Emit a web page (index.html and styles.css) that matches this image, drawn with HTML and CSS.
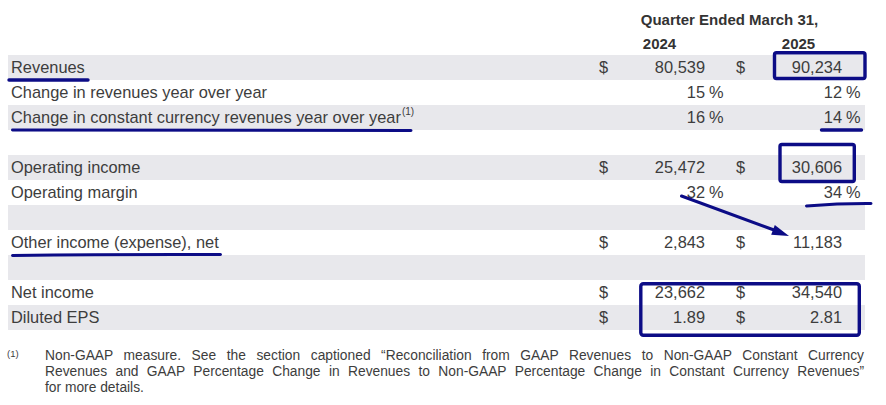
FILE: index.html
```html
<!DOCTYPE html>
<html lang="en">
<head>
<meta charset="utf-8">
<title>Quarter Ended March 31</title>
<link rel="stylesheet" href="styles.css">
</head>
<body>
<div class="page">
  <div class="table">
    <div class="row head1"><div class="quarter">Quarter Ended March 31,</div></div>
    <div class="row head2"><div class="year y1">2024</div><div class="year y2">2025</div></div>

    <div class="row band">
      <div class="label">Revenues</div>
      <div class="cur">$</div><div class="num">80,539</div><div class="pct"></div>
      <div class="cur">$</div><div class="num">90,234</div><div class="pct"></div>
    </div>
    <div class="row">
      <div class="label">Change in revenues year over year</div>
      <div class="cur"></div><div class="num">15</div><div class="pct">%</div>
      <div class="cur"></div><div class="num">12</div><div class="pct">%</div>
    </div>
    <div class="row band">
      <div class="label">Change in constant currency revenues year over year<span class="sup">(1)</span></div>
      <div class="cur"></div><div class="num">16</div><div class="pct">%</div>
      <div class="cur"></div><div class="num">14</div><div class="pct">%</div>
    </div>
    <div class="row"></div>
    <div class="row band">
      <div class="label">Operating income</div>
      <div class="cur">$</div><div class="num">25,472</div><div class="pct"></div>
      <div class="cur">$</div><div class="num">30,606</div><div class="pct"></div>
    </div>
    <div class="row">
      <div class="label">Operating margin</div>
      <div class="cur"></div><div class="num">32</div><div class="pct">%</div>
      <div class="cur"></div><div class="num">34</div><div class="pct">%</div>
    </div>
    <div class="row band"></div>
    <div class="row">
      <div class="label">Other income (expense), net</div>
      <div class="cur">$</div><div class="num">2,843</div><div class="pct"></div>
      <div class="cur">$</div><div class="num">11,183</div><div class="pct"></div>
    </div>
    <div class="row band"></div>
    <div class="row">
      <div class="label">Net income</div>
      <div class="cur">$</div><div class="num">23,662</div><div class="pct"></div>
      <div class="cur">$</div><div class="num">34,540</div><div class="pct"></div>
    </div>
    <div class="row band">
      <div class="label">Diluted EPS</div>
      <div class="cur">$</div><div class="num">1.89</div><div class="pct"></div>
      <div class="cur">$</div><div class="num">2.81</div><div class="pct"></div>
    </div>
  </div>

  <div class="footnote">
    <div class="fn-mark">(1)</div>
    <div class="fn-text">
      <span class="fn-line just">Non-GAAP measure. See the section captioned “Reconciliation from GAAP Revenues to Non-GAAP Constant Currency</span>
      <span class="fn-line just">Revenues and GAAP Percentage Change in Revenues to Non-GAAP Percentage Change in Constant Currency Revenues”</span>
      <span class="fn-line">for more details.</span>
    </div>
  </div>

  <svg class="marks" width="886" height="405" viewBox="0 0 886 405" xmlns="http://www.w3.org/2000/svg">
    <g fill="none" stroke="#0c0c86" stroke-linecap="round" stroke-linejoin="round">
      <path d="M9 80 L88 80" stroke-width="3.4"/>
      <path d="M12.5 130 L411 130.6" stroke-width="3"/>
      <rect x="774.5" y="52.7" width="90.5" height="25.8" rx="2" stroke-width="3.4"/>
      <path d="M821.5 130 L861.5 130" stroke-width="3.4"/>
      <rect x="780" y="144.5" width="74.3" height="37" rx="2" stroke-width="3.4"/>
      <path d="M806.5 206 Q840 203.4 871 203.6" stroke-width="3"/>
      <path d="M681.5 196 L774 230" stroke-width="3"/>
      <path d="M12.5 255.6 Q120 254.2 220.5 254.6" stroke-width="3"/>
      <rect x="640.8" y="283.8" width="218.5" height="51.4" rx="2.5" stroke-width="3.4"/>
    </g>
    <polygon points="789,236 771.2,234.8 774.8,224.9" fill="#0c0c86"/>
  </svg>
</div>
</body>
</html>
```
FILE: styles.css
```css
* { box-sizing: border-box; }

html, body {
  margin: 0;
  padding: 0;
  background: #ffffff;
}

body {
  font-family: "Liberation Sans", Arial, sans-serif;
  color: #3d3d3d;
}

.page {
  position: relative;
  width: 886px;
  height: 405px;
  overflow: hidden;
  padding-top: 7px;
}

.table {
  margin-left: 8px;
  width: 857px;
  display: flex;
  flex-direction: column;
}

.row {
  display: grid;
  grid-template-columns: 591px 20px 86px 31px 20px 86px 23px;
  height: 25px;
  align-items: center;
  font-size: 16.4px;
  line-height: normal;
  white-space: nowrap;
}

.row.band { background: #e8e8ec; }

.head1 { height: 25px; }
.head2 { height: 23px; }

.quarter {
  grid-column: 2 / 8;
  text-align: center;
  padding-right: 5px;
  font-size: 15px;
  font-weight: bold;
  color: #333333;
}

.year {
  font-size: 15px;
  font-weight: bold;
  color: #333333;
  text-align: center;
}
.y1 { grid-column: 3; padding-right: 5px; }
.y2 { grid-column: 6; padding-right: 1px; }

.label { padding-left: 3px; }

.sup {
  font-size: 10px;
  vertical-align: 8px;
  line-height: 0;
  margin-left: 1px;
}

.cur { text-align: left; }
.num { text-align: right; }
.pct { text-align: left; padding-left: 4px; }

.footnote {
  display: flex;
  margin-top: 18px;
  margin-left: 7px;
  width: 857px;
  font-size: 13.8px;
  line-height: 15.8px;
}

.fn-mark {
  width: 38px;
  flex: none;
  font-size: 9.5px;
  line-height: 12px;
}

.fn-text {
  width: 819px;
  flex: none;
}

.fn-line { display: block; }
.fn-line.just {
  text-align: justify;
  text-align-last: justify;
}

.marks {
  position: absolute;
  left: 0;
  top: 0;
  pointer-events: none;
}
```
